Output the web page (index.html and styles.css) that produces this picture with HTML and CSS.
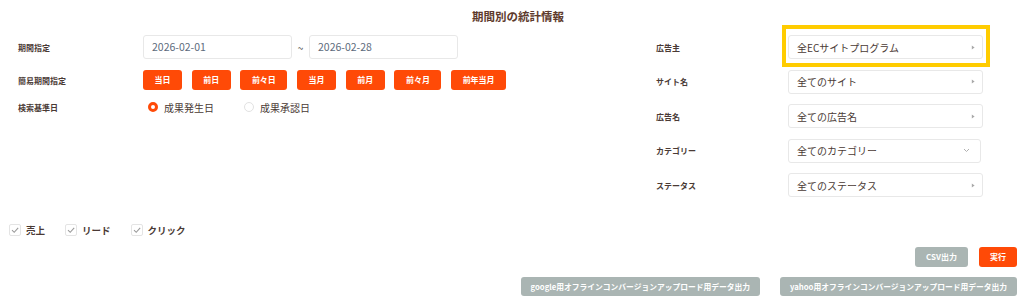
FILE: index.html
```html
<!DOCTYPE html>
<html lang="ja">
<head>
<meta charset="utf-8">
<title>期間別の統計情報</title>
<link rel="stylesheet" href="styles.css">
</head>
<body>
<div class="page">
  <h1 class="title">期間別の統計情報</h1>
  <div class="main">
    <div class="left">
      <div class="row row-date">
        <div class="label">期間指定</div>
        <div class="date-range">
          <div class="date-input">2026-02-01</div>
          <span class="tilde">~</span>
          <div class="date-input">2026-02-28</div>
        </div>
      </div>
      <div class="row row-quick">
        <div class="label">簡易期間指定</div>
        <div class="quick-buttons">
          <button class="qbtn">当日</button>
          <button class="qbtn">前日</button>
          <button class="qbtn">前々日</button>
          <button class="qbtn">当月</button>
          <button class="qbtn">前月</button>
          <button class="qbtn">前々月</button>
          <button class="qbtn">前年当月</button>
        </div>
      </div>
      <div class="row row-radio">
        <div class="label">検索基準日</div>
        <div class="radios">
          <label class="radio"><span class="radio-dot checked"></span>成果発生日</label>
          <label class="radio"><span class="radio-dot"></span>成果承認日</label>
        </div>
      </div>
    </div>
    <div class="right">
      <div class="field">
        <div class="label">広告主</div>
        <div class="highlight">
          <div class="select">全ECサイトプログラム<svg class="tri" width="4" height="5" viewBox="0 0 4 5"><path d="M0.8 0.6 L3.6 2.5 L0.8 4.4 Z" fill="#a8a8a8"/></svg></div>
        </div>
      </div>
      <div class="field">
        <div class="label">サイト名</div>
        <div class="select">全てのサイト<svg class="tri" width="4" height="5" viewBox="0 0 4 5"><path d="M0.8 0.6 L3.6 2.5 L0.8 4.4 Z" fill="#a8a8a8"/></svg></div>
      </div>
      <div class="field">
        <div class="label">広告名</div>
        <div class="select">全ての広告名<svg class="tri" width="4" height="5" viewBox="0 0 4 5"><path d="M0.8 0.6 L3.6 2.5 L0.8 4.4 Z" fill="#a8a8a8"/></svg></div>
      </div>
      <div class="field">
        <div class="label">カテゴリー</div>
        <div class="select select-cat">全てのカテゴリー<svg class="chev" width="7" height="5" viewBox="0 0 7 5"><path d="M1 1 L3.5 3.5 L6 1" fill="none" stroke="#b0b0b0" stroke-width="1"/></svg></div>
      </div>
      <div class="field">
        <div class="label">ステータス</div>
        <div class="select">全てのステータス<svg class="tri" width="4" height="5" viewBox="0 0 4 5"><path d="M0.8 0.6 L3.6 2.5 L0.8 4.4 Z" fill="#a8a8a8"/></svg></div>
      </div>
    </div>
  </div>
  <div class="checks">
    <label class="check"><span class="box"><svg width="10" height="10" viewBox="0 0 10 10"><path d="M2 5.2 L4.2 7.3 L8.2 2.8" fill="none" stroke="#9a9a9a" stroke-width="1.1"/></svg></span>売上</label>
    <label class="check"><span class="box"><svg width="10" height="10" viewBox="0 0 10 10"><path d="M2 5.2 L4.2 7.3 L8.2 2.8" fill="none" stroke="#9a9a9a" stroke-width="1.1"/></svg></span>リード</label>
    <label class="check"><span class="box"><svg width="10" height="10" viewBox="0 0 10 10"><path d="M2 5.2 L4.2 7.3 L8.2 2.8" fill="none" stroke="#9a9a9a" stroke-width="1.1"/></svg></span>クリック</label>
  </div>
  <div class="actions">
    <button class="btn btn-gray btn-csv">CSV出力</button>
    <button class="btn btn-orange btn-run">実行</button>
  </div>
  <div class="actions actions-export">
    <button class="btn btn-gray btn-google">google用オフラインコンバージョンアップロード用データ出力</button>
    <button class="btn btn-gray btn-yahoo">yahoo用オフラインコンバージョンアップロード用データ出力</button>
  </div>
</div>
</body>
</html>
```
FILE: styles.css
```css
html, body {
  margin: 0;
  padding: 0;
  background: #ffffff;
}
body {
  width: 1024px;
  height: 302px;
  overflow: hidden;
  font-family: "Noto Sans CJK JP", "Noto Sans", sans-serif;
  color: #4a3a35;
}
.page {
  width: 1024px;
}
.title {
  margin: 0;
  height: 35px;
  line-height: 32px;
  text-align: center;
  padding-left: 12px;
  font-size: 11.5px;
  font-weight: 700;
  color: #5e3a2c;
}
.main {
  display: flex;
}
.left {
  width: 638px;
  padding-left: 18px;
}
.row {
  display: flex;
  align-items: center;
}
.label {
  font-size: 8px;
  font-weight: 700;
  color: #4a3a35;
  flex: 0 0 auto;
}
.left .label {
  width: 125px;
}
.row-date {
  height: 24px;
}
.row-quick {
  height: 20px;
  margin-top: 11px;
}
.row-radio {
  height: 14px;
  margin-top: 10px;
}
.date-range {
  display: flex;
  align-items: center;
}
.date-input {
  box-sizing: border-box;
  width: 149px;
  height: 24px;
  border: 1px solid #e8e8e8;
  border-radius: 3px;
  padding-left: 8px;
  font-size: 10.5px;
  line-height: 22px;
  color: #5d6b7c;
  background: #fff;
}
.tilde {
  width: 17px;
  text-align: center;
  font-size: 10px;
  color: #555;
}
.quick-buttons {
  display: flex;
  gap: 9.7px;
}
.qbtn {
  height: 20px;
  padding: 0 11.5px;
  border: none;
  border-radius: 3px;
  background: #ff4a07;
  color: #ffffff;
  font-family: inherit;
  font-size: 8px;
  font-weight: 700;
  line-height: 20px;
}
.radios {
  display: flex;
  align-items: center;
  gap: 30px;
  padding-left: 5px;
}
.radio {
  display: flex;
  align-items: center;
  gap: 6px;
  font-size: 10px;
  color: #4a3a35;
}
.radio-dot {
  box-sizing: border-box;
  width: 10px;
  height: 10px;
  border-radius: 50%;
  border: 1px solid #e2e2e2;
  background: #fff;
}
.radio-dot.checked {
  border: 3px solid #ff4a07;
}
.right {
  flex: 1;
}
.field {
  display: flex;
  align-items: center;
  height: 24px;
  margin-bottom: 10.5px;
}
.right .label {
  width: 132px;
}
.highlight {
  position: relative;
}
.highlight::after {
  content: "";
  position: absolute;
  left: -6px;
  right: -7px;
  top: -10px;
  bottom: -8px;
  border: 4px solid #ffcc00;
  pointer-events: none;
}
.select {
  box-sizing: border-box;
  width: 195px;
  height: 24px;
  border: 1px solid #e8e8e8;
  border-radius: 3px;
  padding: 0 7px 0 8px;
  display: flex;
  align-items: center;
  justify-content: space-between;
  font-size: 10px;
  color: #4a3a35;
  background: #fff;
}
.select-cat {
  width: 193px;
  padding-right: 10px;
}
.tri {
  display: block;
}
.chev {
  display: block;
}
.checks {
  display: flex;
  align-items: center;
  gap: 20px;
  height: 12px;
  margin-top: 16px;
  padding-left: 9px;
}
.check {
  display: flex;
  align-items: center;
  gap: 5px;
  font-size: 9.5px;
  font-weight: 700;
  color: #4a3a35;
}
.box {
  box-sizing: border-box;
  width: 12px;
  height: 12px;
  border: 1px solid #e4e4e4;
  border-radius: 2px;
  display: flex;
  align-items: center;
  justify-content: center;
}
.actions {
  display: flex;
  justify-content: flex-end;
  gap: 11px;
  padding-right: 7px;
  margin-top: 11px;
}
.actions-export {
  gap: 20px;
  margin-top: 10px;
}
.btn {
  height: 20px;
  border: none;
  border-radius: 3px;
  color: #ffffff;
  font-family: inherit;
  font-size: 8px;
  font-weight: 700;
  line-height: 20px;
  padding: 0 11px;
}
.actions-export .btn {
  height: 19px;
  line-height: 19px;
  padding: 0 10px;
  font-size: 7.75px;
}
.btn-gray {
  background: #aab5b3;
}
.btn-orange {
  background: #ff4a07;
}
```
